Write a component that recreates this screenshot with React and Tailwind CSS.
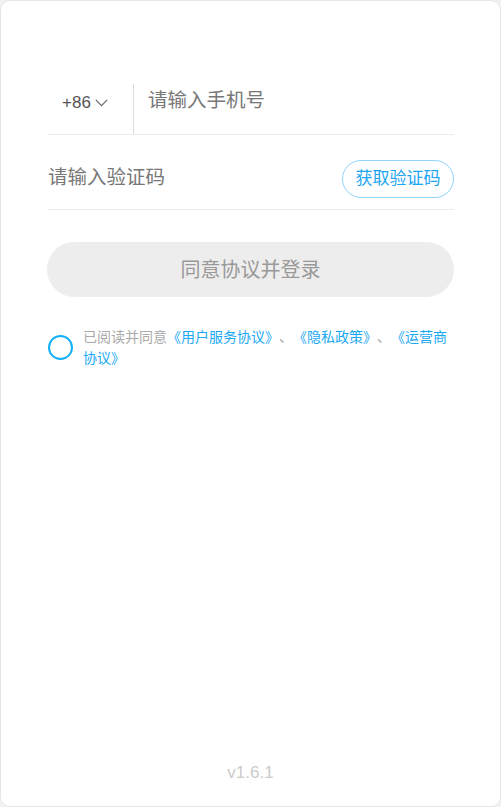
import React from "react";

export default function App() {
  const font = { fontFamily: '"Liberation Sans", Arial, "Noto Sans CJK SC", sans-serif' };
  const link = "text-[#1aa9f4]";
  return (
    <div className="w-[501px] h-[807px] bg-[#f2f2f2]" style={font}>
      <div className="h-full w-full bg-white border border-[#e6e6e6] rounded-[10px] flex flex-col">
        <div className="px-[46px] pt-[83px] flex flex-col">
          <div className="flex h-[51px] border-b border-[#ececec]">
            <div className="w-[87px] flex items-center pl-[15px] pb-[14px] border-r border-[#dcdcdc]">
              <span className="text-[17px] text-[#555] leading-none">+86</span>
              <svg className="ml-[4px] mt-[1px]" width="13" height="8" viewBox="0 0 13 8" fill="none">
                <path d="M0.8 0.8 L6.5 6.6 L12.2 0.8" stroke="#666" strokeWidth="1.1" />
              </svg>
            </div>
            <div className="flex items-center pl-[14px] pb-[16px] text-[19.5px] text-[#777]">请输入手机号</div>
          </div>
          <div className="flex items-center justify-between h-[75px] pt-[14px] border-b border-[#ececec]">
            <div className="text-[19.5px] text-[#777] pl-[1px] pb-[2px]">请输入验证码</div>
            <div className="h-[38px] w-[112px] flex items-center justify-center rounded-full border border-[#8fd4fb] text-[17px] text-[#1ca5f2]">获取验证码</div>
          </div>
          <div className="mt-[32px] h-[55px] rounded-full bg-[#ededed] flex items-center justify-center text-[20px] text-[#999]">同意协议并登录</div>
          <div className="mt-[30px] flex items-start">
            <div className="mt-[8px] ml-[1px] w-[25px] h-[25px] shrink-0 rounded-full border-[2.5px] border-[#12b0f7]"></div>
            <p className="ml-[10px] flex-1 whitespace-nowrap [text-spacing-trim:space-all] text-[14px] leading-[21px] text-[#aaa]">
              已阅读并同意<span className={link}>《用户服务协议》</span>、<span className={link}>《隐私政策》</span>、<span className={link}>《运营商</span>
              <br />
              <span className={link}>协议》</span>
            </p>
          </div>
        </div>
        <div className="mt-auto pb-[21px] text-center text-[17px] text-[#cbcbcb]">v1.6.1</div>
      </div>
    </div>
  );
}
